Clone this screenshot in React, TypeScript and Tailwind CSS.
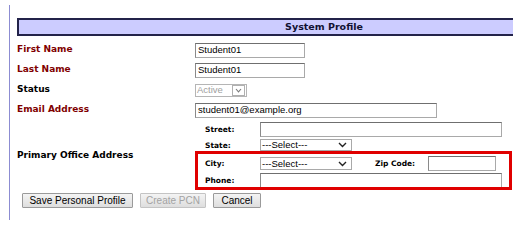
import React from 'react';

const label = "font-['DejaVu_Sans',Verdana,sans-serif] font-bold text-[9px]";
const subLabel = "font-['DejaVu_Sans',Verdana,sans-serif] font-bold text-[7.5px] text-black";
const field = "font-['Liberation_Sans',Arial,sans-serif] text-[9.5px] text-black";
const inputBox = `h-[15px] border border-[#a9a9a9] border-t-[#6f6f6f] border-l-[#8a8a8a] bg-white px-[2px] flex items-center ${field}`;

const Chevron: React.FC = () => (
    <svg width="9" height="6" viewBox="0 0 9 6" className="shrink-0">
        <path d="M1 1 L4.5 4.5 L8 1" fill="none" stroke="#222" strokeWidth="1.4" />
    </svg>
);

const SelectBox: React.FC<{ className?: string }> = ({ className }) => (
    <div className={`h-[12px] w-[92px] border border-[#a9a9a9] bg-white pl-[1px] pr-[4px] flex items-center justify-between ${field} ${className ?? ''}`}>
        <span className="leading-none">---Select---</span>
        <Chevron />
    </div>
);

const Button: React.FC<{ children: React.ReactNode; disabled?: boolean; className?: string }> = ({ children, disabled, className }) => (
    <div
        className={`h-[15px] flex items-center justify-center border rounded-[1px] bg-gradient-to-b from-[#f4f4f4] to-[#dedede] font-['Liberation_Sans',Arial,sans-serif] text-[10px] leading-none ${
            disabled ? 'border-[#c4c4c4] text-[#a3a3a3]' : 'border-[#9a9a9a] text-black'
        } ${className ?? ''}`}
    >
        {children}
    </div>
);

const Row: React.FC<{ title: string; red?: boolean; children: React.ReactNode }> = ({ title, red, children }) => (
    <div className="flex h-[20px] items-center">
        <div className={`w-[178px] ${label} ${red ? 'text-[#800000]' : 'text-black'}`}>{title}</div>
        {children}
    </div>
);

export default function App() {
    return (
        <div className="relative w-[522px] h-[232px] bg-white pt-[5px] pl-[9px]">
            <div className="h-[215px] border-l border-[#8c8cd2] pl-[7px] pt-[13px]">
                <div className="h-[18px] w-[496px] bg-[#ccccff] border-y-2 border-l-2 border-[#23234a] pl-[116px] flex items-center justify-center">
                    <span className="font-['DejaVu_Sans',Verdana,sans-serif] font-bold text-[9.5px] text-[#111133]">System Profile</span>
                </div>

                <div className="mt-[4px]">
                    <Row title="First Name" red>
                        <div className={`w-[110px] ${inputBox}`}>Student01</div>
                    </Row>
                    <Row title="Last Name" red>
                        <div className={`w-[110px] ${inputBox}`}>Student01</div>
                    </Row>
                    <Row title="Status">
                        <div className="h-[13px] w-[52px] border border-[#b5b5b5] bg-white pl-[1px] flex items-center justify-between">
                            <span className="font-['Liberation_Sans',Arial,sans-serif] text-[9.5px] text-[#a0a0a0] leading-none">Active</span>
                            <div className="h-[11px] w-[13px] border border-[#b0b0b0] flex items-center justify-center mr-[1px]">
                                <svg width="7" height="5" viewBox="0 0 7 5">
                                    <path d="M1 1 L3.5 3.8 L6 1" fill="none" stroke="#7a7a7a" strokeWidth="1.1" />
                                </svg>
                            </div>
                        </div>
                    </Row>
                    <Row title="Email Address" red>
                        <div className={`w-[242px] ${inputBox}`}>student01@example.org</div>
                    </Row>
                </div>

                <div className="flex items-center mt-[1px]">
                    <div className={`w-[178px] pt-[2px] ${label} text-black`}>Primary Office Address</div>
                    <div className="pl-[10px]">
                        <div className="flex h-[17px] items-center">
                            <div className={`w-[55px] ${subLabel}`}>Street:</div>
                            <div className={`w-[242px] ${inputBox}`} />
                        </div>
                        <div className="flex h-[17px] items-start pt-[1px]">
                            <div className={`w-[55px] pt-[1px] ${subLabel}`}>State:</div>
                            <SelectBox />
                        </div>
                        <div className="flex h-[17px] items-center">
                            <div className={`w-[55px] ${subLabel}`}>City:</div>
                            <SelectBox className="h-[13px]" />
                            <div className={`ml-[23px] w-[53px] ${subLabel}`}>Zip Code:</div>
                            <div className={`w-[68px] ${inputBox}`} />
                        </div>
                        <div className="flex h-[17px] items-center">
                            <div className={`w-[55px] ${subLabel}`}>Phone:</div>
                            <div className={`w-[242px] ${inputBox}`} />
                        </div>
                    </div>
                </div>

                <div className="flex gap-[7px] mt-[4px] pl-[5px]">
                    <Button className="w-[111px]">Save Personal Profile</Button>
                    <Button disabled className="w-[66px]">Create PCN</Button>
                    <Button className="w-[48px]">Cancel</Button>
                </div>
            </div>

            <div className="absolute left-[195px] top-[151px] w-[317px] h-[39px] border-[3px] border-[#e00000]" />
        </div>
    );
}
